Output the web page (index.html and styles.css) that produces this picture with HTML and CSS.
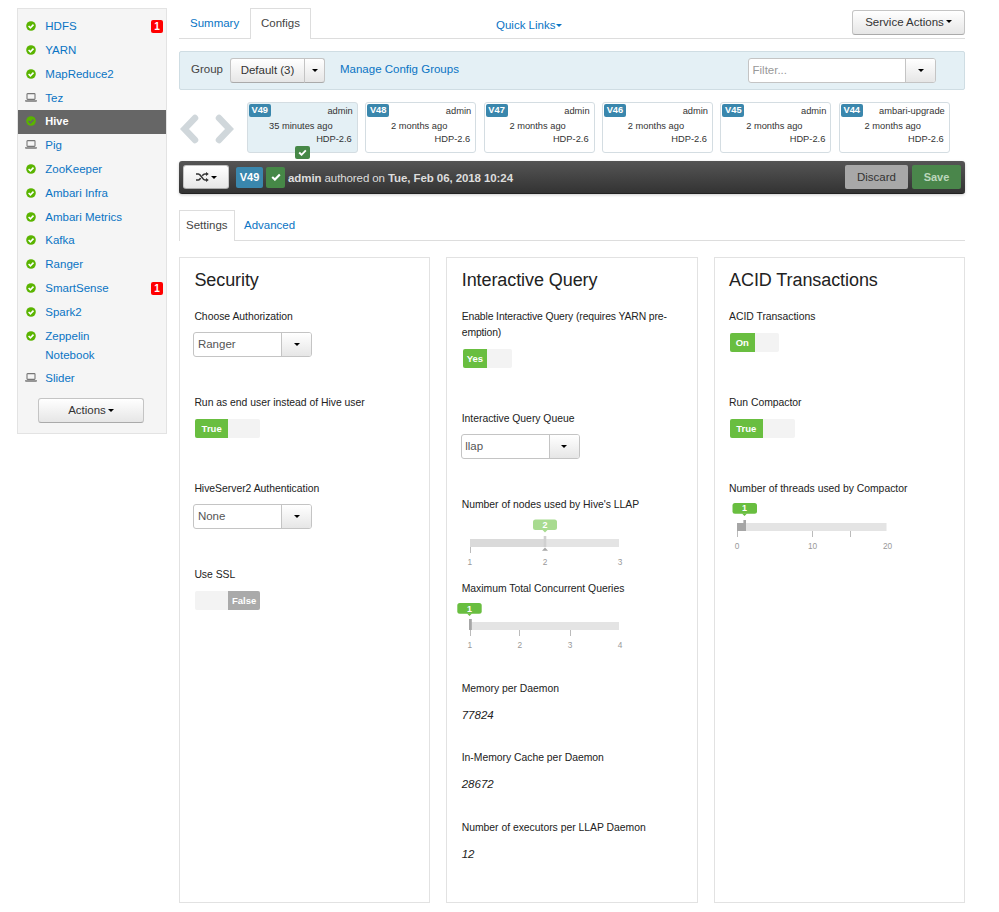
FILE: index.html
```html
<!DOCTYPE html>
<html lang="en">
<head>
    <meta charset="UTF-8">
    <meta name="viewport" content="width=device-width, initial-scale=1.0">
    <title>Ambari - Hive</title>
    <link rel="stylesheet" href="styles.css">
</head>
<body>
    <!-- shared icons -->
    <svg class="defs" width="0" height="0">
        <symbol id="ok" viewBox="0 0 10 10">
            <circle cx="5" cy="5" r="4.8" fill="#5ab400"/>
            <path d="M2.6 5 4.4 6.8 7.5 3.6" fill="none" stroke="currentColor" stroke-width="1.6"/>
        </symbol>
        <symbol id="laptop" viewBox="0 0 12 9">
            <rect x="2" y="0.6" width="8" height="5.8" rx="0.6" fill="none" stroke="#777" stroke-width="1.1"/>
            <path d="M0 7.2h12v0.6q0 0.9-1 0.9H1q-1 0-1-0.9z" fill="#777"/>
        </symbol>
        <symbol id="check" viewBox="0 0 10 8">
            <path d="M1.2 4 3.9 6.6 8.8 1.5" fill="none" stroke="#fff" stroke-width="2.1"/>
        </symbol>
        <symbol id="chevron" viewBox="0 0 19 30">
            <path d="M15 4 4.5 15 15 26" fill="none" stroke="#d0d7db" stroke-width="6.5" stroke-linecap="round"/>
        </symbol>
    </svg>

    <div class="page">
        <div class="sidebar">
            <ul class="services">
                <li><svg class="ok"><use href="#ok"/></svg><a>HDFS</a><span class="alerts">1</span></li>
                <li><svg class="ok"><use href="#ok"/></svg><a>YARN</a></li>
                <li><svg class="ok"><use href="#ok"/></svg><a>MapReduce2</a></li>
                <li><svg class="laptop"><use href="#laptop"/></svg><a>Tez</a></li>
                <li class="active"><svg class="ok"><use href="#ok"/></svg><a>Hive</a></li>
                <li><svg class="laptop"><use href="#laptop"/></svg><a>Pig</a></li>
                <li><svg class="ok"><use href="#ok"/></svg><a>ZooKeeper</a></li>
                <li><svg class="ok"><use href="#ok"/></svg><a>Ambari Infra</a></li>
                <li><svg class="ok"><use href="#ok"/></svg><a>Ambari Metrics</a></li>
                <li><svg class="ok"><use href="#ok"/></svg><a>Kafka</a></li>
                <li><svg class="ok"><use href="#ok"/></svg><a>Ranger</a></li>
                <li><svg class="ok"><use href="#ok"/></svg><a>SmartSense</a><span class="alerts">1</span></li>
                <li><svg class="ok"><use href="#ok"/></svg><a>Spark2</a></li>
                <li><svg class="ok"><use href="#ok"/></svg><a>Zeppelin<br>Notebook</a></li>
                <li><svg class="laptop"><use href="#laptop"/></svg><a>Slider</a></li>
            </ul>
            <div class="btn actions">Actions <i class="caret"></i></div>
        </div>

        <div class="main">
            <div class="top-tabs">
                <a class="tab">Summary</a>
                <a class="tab active">Configs</a>
                <a class="quick-links">Quick Links<i class="caret"></i></a>
                <div class="btn service-actions">Service Actions <i class="caret"></i></div>
            </div>

            <div class="group-bar">
                <span class="group-label">Group</span>
                <div class="btn-group">
                    <div class="btn default-group">Default (3)</div>
                    <div class="btn toggle-btn"><i class="caret"></i></div>
                </div>
                <a class="manage">Manage Config Groups</a>
                <div class="combo filter">
                    <span class="combo-text">Filter...</span>
                    <span class="combo-btn"><i class="caret"></i></span>
                </div>
            </div>

            <div class="versions">
                <svg class="chev"><use href="#chevron"/></svg>
                <svg class="chev next"><use href="#chevron"/></svg>
                <div class="version current">
                    <div class="version-top"><span class="label">V49</span><span>admin</span></div>
                    <div class="when">35 minutes ago</div>
                    <div class="stack">HDP-2.6</div>
                    <span class="mark"><svg><use href="#check"/></svg></span>
                </div>
                <div class="version">
                    <div class="version-top"><span class="label">V48</span><span>admin</span></div>
                    <div class="when">2 months ago</div>
                    <div class="stack">HDP-2.6</div>
                </div>
                <div class="version">
                    <div class="version-top"><span class="label">V47</span><span>admin</span></div>
                    <div class="when">2 months ago</div>
                    <div class="stack">HDP-2.6</div>
                </div>
                <div class="version">
                    <div class="version-top"><span class="label">V46</span><span>admin</span></div>
                    <div class="when">2 months ago</div>
                    <div class="stack">HDP-2.6</div>
                </div>
                <div class="version">
                    <div class="version-top"><span class="label">V45</span><span>admin</span></div>
                    <div class="when">2 months ago</div>
                    <div class="stack">HDP-2.6</div>
                </div>
                <div class="version">
                    <div class="version-top"><span class="label">V44</span><span>ambari-upgrade</span></div>
                    <div class="when">2 months ago</div>
                    <div class="stack">HDP-2.6</div>
                </div>
            </div>

            <div class="toolbar">
                <div class="btn shuffle">
                    <svg viewBox="0 0 13 10">
                        <path d="M0 2H2.4C5 2 6.2 8 9 8H10.5M0 8H2.4C3.4 8 4 7.2 4.6 6.2M6.3 3.8C7 2.8 7.8 2 9 2H10.5" fill="none" stroke="#333" stroke-width="1.6"/>
                        <path d="M10 0 12.8 2 10 4.1zM10 5.9 12.8 8 10 10z" fill="#333"/>
                    </svg>
                    <i class="caret"></i>
                </div>
                <span class="big-label">V49</span>
                <span class="big-mark"><svg><use href="#check"/></svg></span>
                <span class="authored"><b>admin</b> authored on <b>Tue, Feb 06, 2018 10:24</b></span>
                <div class="tool-btn discard">Discard</div>
                <div class="tool-btn save">Save</div>
            </div>

            <div class="sub-tabs">
                <a class="tab active">Settings</a>
                <a class="tab">Advanced</a>
            </div>

            <div class="panels">
                <div class="panel">
                    <h4>Security</h4>
                    <div class="config">
                        <label>Choose Authorization</label>
                        <div class="combo"><span class="combo-text">Ranger</span><span class="combo-btn"><i class="caret"></i></span></div>
                    </div>
                    <div class="config">
                        <label>Run as end user instead of Hive user</label>
                        <div class="switch wide"><span class="on">True</span><span></span></div>
                    </div>
                    <div class="config">
                        <label>HiveServer2 Authentication</label>
                        <div class="combo"><span class="combo-text">None</span><span class="combo-btn"><i class="caret"></i></span></div>
                    </div>
                    <div class="config">
                        <label>Use SSL</label>
                        <div class="switch wide"><span></span><span class="off">False</span></div>
                    </div>
                </div>

                <div class="panel">
                    <h4>Interactive Query</h4>
                    <div class="config two-line">
                        <label>Enable Interactive Query (requires YARN pre-<br>emption)</label>
                        <div class="switch"><span class="on">Yes</span><span></span></div>
                    </div>
                    <div class="config">
                        <label>Interactive Query Queue</label>
                        <div class="combo"><span class="combo-text">llap</span><span class="combo-btn"><i class="caret"></i></span></div>
                    </div>
                    <div class="config nodes">
                        <label>Number of nodes used by Hive's LLAP</label>
                        <svg class="slider disabled">
                            <rect class="track" x="16" y="25" width="149" height="8"/>
                            <rect class="range" x="16" y="25" width="75" height="8"/>
                            <rect class="handle" x="89.7" y="22" width="2.6" height="11"/>
                            <path class="tick" d="M16.5 33v6"/>
                            <path class="pointer" d="M88 36.8 91 33.6 94 36.8z"/>
                            <rect class="tip" x="79" y="5.5" width="24" height="10.5" rx="2.5"/>
                            <path class="tip" d="M88.5 16h5L91 18.5z"/>
                            <text class="tip-text" x="91" y="14">2</text>
                            <text x="15.7" y="51">1</text>
                            <text x="91" y="51">2</text>
                            <text x="166" y="51">3</text>
                        </svg>
                    </div>
                    <div class="config queries">
                        <label>Maximum Total Concurrent Queries</label>
                        <svg class="slider">
                            <rect class="track" x="16" y="24" width="149" height="8"/>
                            <rect class="handle" x="15" y="21" width="2.8" height="11"/>
                            <path class="tick" d="M16.5 32v6M65.5 32v6M116.5 32v6"/>
                            <rect class="tip" x="3.3" y="5" width="24.4" height="10.8" rx="2.5"/>
                            <path class="tip" d="M13 15.6h5L15.5 18.1z"/>
                            <text class="tip-text" x="15.6" y="13.6">1</text>
                            <text x="15.7" y="50">1</text>
                            <text x="65.7" y="50">2</text>
                            <text x="116" y="50">3</text>
                            <text x="166" y="50">4</text>
                        </svg>
                    </div>
                    <div class="config value">
                        <label>Memory per Daemon</label>
                        <em>77824</em>
                    </div>
                    <div class="config value">
                        <label>In-Memory Cache per Daemon</label>
                        <em>28672</em>
                    </div>
                    <div class="config value">
                        <label>Number of executors per LLAP Daemon</label>
                        <em>12</em>
                    </div>
                </div>

                <div class="panel">
                    <h4>ACID Transactions</h4>
                    <div class="config">
                        <label>ACID Transactions</label>
                        <div class="switch"><span class="on">On</span><span></span></div>
                    </div>
                    <div class="config">
                        <label>Run Compactor</label>
                        <div class="switch wide"><span class="on">True</span><span></span></div>
                    </div>
                    <div class="config">
                        <label>Number of threads used by Compactor</label>
                        <svg class="slider">
                            <rect class="track" x="16" y="25" width="149.5" height="8"/>
                            <rect class="handle" x="16" y="25" width="9" height="8"/>
                            <rect class="handle" x="22.4" y="22" width="2.6" height="11"/>
                            <path class="tick" d="M16.5 33v6M91.5 33v6M129.5 33v6"/>
                            <rect class="tip" x="11.5" y="5" width="24.5" height="10.8" rx="2.5"/>
                            <path class="tip" d="M21 15.5h5L23.5 18z"/>
                            <text class="tip-text" x="23.6" y="13.3">1</text>
                            <text x="16" y="51">0</text>
                            <text x="91.5" y="51">10</text>
                            <text x="166.5" y="51">20</text>
                        </svg>
                    </div>
                </div>
            </div>
        </div>
    </div>
</body>
</html>
```
FILE: styles.css
```css
* {
    box-sizing: border-box;
}
body {
    margin: 0;
    font-family: "Liberation Sans", Arial, sans-serif;
    font-size: 11.5px;
    line-height: 16px;
    color: #333;
    background: #fff;
    white-space: nowrap;
}
.defs {
    position: absolute;
}
a {
    color: #0a74c4;
}
.page {
    display: flex;
    gap: 12px;
    padding: 8px 34px 0 17px;
    height: 912px;
    overflow: hidden;
}
.caret {
    display: inline-block;
    border: 3.5px solid transparent;
    border-top-color: #000;
    border-bottom: 0;
    vertical-align: 2px;
}
.btn {
    display: flex;
    align-items: center;
    justify-content: center;
    gap: 2px;
    height: 25px;
    border: 1px solid #c4c4c4;
    border-bottom-color: #aaa;
    border-radius: 3px;
    background: linear-gradient(#fff, #e6e6e6);
    color: #333;
}

/* sidebar */
.sidebar {
    width: 150px;
    height: 426px;
    flex: none;
    background: #f5f5f5;
    border: 1px solid #e3e3e3;
}
.services {
    list-style: none;
    margin: 0;
    padding: 6px 0 0;
}
.services li {
    display: flex;
    align-items: flex-start;
    padding: 2.35px 4px 2.35px 7px;
    line-height: 19.1px;
}
.services svg {
    flex: none;
    width: 12px;
    margin-right: 8.3px;
    color: #fff;
}
.services .ok {
    height: 10px;
    margin-top: 4px;
}
.services .laptop {
    height: 9px;
    margin-top: 4px;
}
.services a {
    flex: 1;
}
.services .active {
    background: #666;
}
.services .active svg {
    color: #666;
}
.services .active a {
    color: #fff;
    font-weight: bold;
    font-size: 11px;
}
.alerts {
    width: 12px;
    height: 13px;
    margin: 3px -1px 0 0;
    border-radius: 2px;
    background: #f00;
    color: #fff;
    font-size: 10px;
    font-weight: bold;
    line-height: 13px;
    text-align: center;
}
.actions {
    width: 106px;
    margin: 7px 0 0 20px;
}

/* tabs */
.main {
    flex: 1;
}
.top-tabs {
    display: flex;
    height: 31px;
    border-bottom: 1px solid #ddd;
}
.tab {
    display: flex;
    align-items: center;
    padding: 0 10px;
    border: 1px solid transparent;
}
.tab.active {
    color: #444;
    background: #fff;
    border-color: #ddd;
    border-bottom: 0;
    margin-bottom: -1px;
}
.top-tabs .tab:first-child {
    width: 71px;
}
.top-tabs .tab.active {
    width: 61px;
    padding-bottom: 2px;
}
.quick-links {
    margin: 9px 0 0 185px;
}
.quick-links .caret {
    border-top-color: #0a74c4;
    margin-left: 1px;
}
.service-actions {
    width: 113px;
    margin: 2px 0 0 auto;
    padding-bottom: 2px;
}

/* config group bar */
.group-bar {
    display: flex;
    align-items: center;
    height: 39px;
    margin-top: 12px;
    padding: 0 28px 0 11px;
    border: 1px solid #cfdde3;
    border-radius: 2px;
    background: #e4f0f5;
}
.group-label {
    width: 39px;
    margin-top: -3px;
    color: #444;
}
.btn-group {
    display: flex;
}
.default-group {
    width: 75px;
    padding-bottom: 1px;
    border-radius: 3px 0 0 3px;
}
.toggle-btn {
    width: 21px;
    margin-left: -1px;
    border-radius: 0 3px 3px 0;
}
.manage {
    margin: -3px 0 0 15px;
}
.combo {
    display: flex;
    width: 119px;
    height: 25px;
    border: 1px solid #c4c4c4;
    border-radius: 3px;
    background: #fff;
    line-height: 23px;
    color: #555;
}
.combo-text {
    flex: 1;
    padding-left: 3.5px;
}
.combo-btn {
    display: flex;
    align-items: center;
    justify-content: center;
    width: 30px;
    border-left: 1px solid #c4c4c4;
    border-radius: 0 2px 2px 0;
    background: linear-gradient(#fff, #e6e6e6);
}
.filter {
    width: 188px;
    margin-left: auto;
}
.filter .combo-text {
    color: #999;
}

/* version history */
.versions {
    display: flex;
    gap: 7.4px;
    margin-top: 12px;
    height: 51px;
}
.chev {
    flex: none;
    width: 19px;
    height: 30px;
    margin: 12px 0 0 1px;
}
.chev.next {
    margin: 12px 5px 0 9px;
    transform: scaleX(-1);
}
.version {
    position: relative;
    width: 111px;
    flex: none;
    padding: 1px 4px 0 1px;
    border: 1px solid #d4dde2;
    border-radius: 3px;
    font-size: 9.3px;
    line-height: 13px;
    color: #333;
}
.current {
    background: #e4f0f5;
}
.version-top {
    display: flex;
    justify-content: space-between;
    height: 16px;
    line-height: 14px;
}
.label {
    width: 22px;
    height: 13px;
    border-radius: 2px;
    background: #3a87ad;
    color: #fff;
    font-weight: bold;
    line-height: 13px;
    text-align: center;
}
.when {
    text-align: center;
}
.stack {
    text-align: right;
    padding-right: 1px;
    line-height: 12px;
}
.mark {
    position: absolute;
    left: 47px;
    top: 43px;
    width: 15px;
    height: 13px;
    border-radius: 2px;
    background: #468847;
    display: flex;
    align-items: center;
    justify-content: center;
}
.mark svg {
    width: 9px;
    height: 7px;
}

.toolbar {
    display: flex;
    align-items: center;
    height: 33px;
    margin-top: 8px;
    padding: 0 4px;
    border-radius: 3px;
    background: linear-gradient(#555, #333);
    border-bottom: 1px solid #222;
    box-shadow: 0 1px 3px rgba(0,0,0,0.2);
    color: #ddd;
}
.shuffle {
    width: 46px;
    height: 24px;
}
.shuffle svg {
    width: 13px;
    height: 10px;
}
.big-label, .big-mark {
    display: flex;
    align-items: center;
    justify-content: center;
    height: 21px;
    border-radius: 2px;
    color: #fff;
}
.big-label {
    width: 27px;
    margin-left: 7px;
    background: #3a87ad;
    font-weight: bold;
    font-size: 11px;
}
.big-mark {
    width: 19px;
    margin: 0 3px;
    background: #468847;
}
.big-mark svg {
    width: 10px;
    height: 8px;
}
.authored {
    flex: 1;
    padding-top: 1px;
    letter-spacing: -0.09px;
}
.tool-btn {
    height: 24px;
    border-radius: 2px;
    line-height: 24px;
    text-align: center;
}
.discard {
    width: 63px;
    background: #a8a8a8;
    color: #333;
}
.save {
    width: 49px;
    margin-left: 4px;
    background: #4a864b;
    color: #bcd6bc;
    font-weight: bold;
    font-size: 11px;
}

.sub-tabs {
    display: flex;
    height: 31px;
    margin-top: 16px;
    border-bottom: 1px solid #ddd;
}
.sub-tabs .tab {
    padding: 0 8px;
}
.sub-tabs .tab.active {
    width: 56px;
    padding: 0 6px 2px;
}

/* config panels */
.panels {
    display: grid;
    grid-template-columns: 1fr 1fr 1fr;
    gap: 16px;
    margin-top: 16px;
}
.panel {
    height: 646px;
    padding: 11px 0 0 14.4px;
    border: 1px solid #e2e2e2;
}
h4 {
    margin: 0 0 17px;
    font-size: 18px;
    letter-spacing: -0.08px;
    font-weight: normal;
    line-height: 22px;
    color: #222;
}
.config {
    height: 86px;
}
.config label {
    display: block;
    padding-top: 1px;
    margin-bottom: -1px;
    font-size: 10.4px;
    letter-spacing: -0.02px;
    line-height: 16px;
    color: #222;
}
.config .combo {
    margin: 8px 0 0 -1px;
}
.two-line {
    height: 102px;
}
.two-line label {
    letter-spacing: -0.12px;
}
.nodes {
    height: 84px;
}
.queries {
    height: 100px;
}
.value {
    height: 69.3px;
}
.value em {
    display: block;
    margin-top: 11px;
    color: #222;
}
.switch {
    display: flex;
    width: 49px;
    height: 19px;
    margin: 9px 0 0 1px;
    border-radius: 2px;
    overflow: hidden;
    background: #f3f3f3;
    color: #fff;
    font-size: 9.5px;
    font-weight: bold;
    line-height: 20px;
    text-align: center;
}
.switch.wide {
    width: 65px;
}
.switch span {
    flex: 1;
}
.on {
    background: #69be40;
}
.off {
    background: #aaa;
}

/* sliders */
.slider {
    display: block;
    width: 190px;
    height: 56px;
    margin: 2px 0 0 -7.6px;
    overflow: visible;
}
.slider text {
    font-size: 8.3px;
    fill: #999;
    text-anchor: middle;
}
.slider .tip-text {
    font-size: 9px;
    font-weight: bold;
    fill: #fff;
}
.track {
    fill: #e4e4e4;
}
.range {
    fill: #dadada;
}
.handle, .pointer {
    fill: #a6a6a6;
}
.tick {
    stroke: #bbb;
}
.tip {
    fill: #69be40;
}
.disabled .tip {
    fill: #a8db90;
}
.disabled .handle {
    fill: #d0d0d0;
}
```
